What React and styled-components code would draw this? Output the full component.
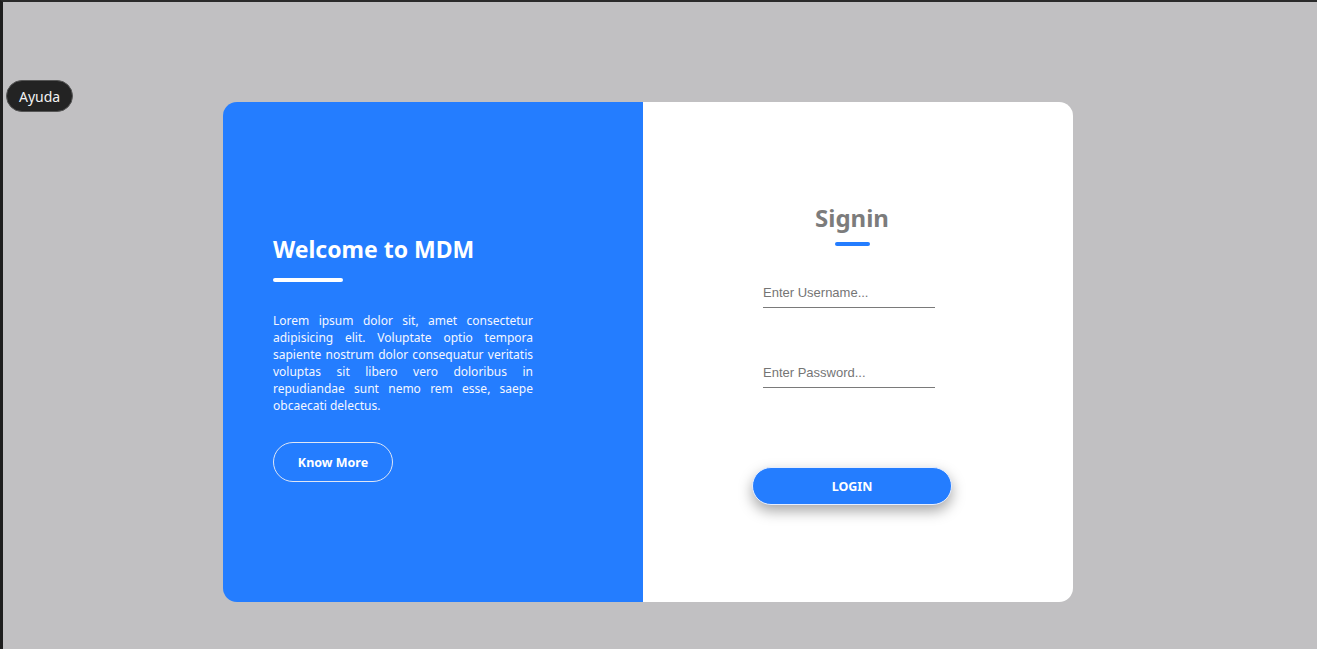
import React from "react";
import styled, { createGlobalStyle } from "styled-components";

const Global = createGlobalStyle`
  html, body { margin: 0; padding: 0; height: 100%; }
  body {
    background: #c1c0c2;
    font-family: "Noto Sans", "Open Sans", sans-serif;
    border-top: 2px solid #2a2a2a;
    border-left: 3px solid #1e1e1e;
    box-sizing: border-box;
    min-height: 649px;
  }
  #root { min-height: 647px; }
`;

const Page = styled.main`
  display: flex;
  padding: 100px 0 0 220px;
`;

const HelpButton = styled.button`
  position: fixed;
  left: 6px;
  top: 80px;
  height: 32px;
  padding: 0 12px;
  border-radius: 16px;
  background: #232323;
  border: 1px solid #555;
  color: #f2f2f2;
  font-family: "Noto Sans", sans-serif;
  font-size: 14px;
`;

const Card = styled.section`
  display: grid;
  grid-template-columns: 420px 430px;
  height: 500px;
  border-radius: 14px;
  overflow: hidden;
`;

const InfoPanel = styled.div`
  background: #247dff;
  color: #fff;
  padding: 132px 110px 0 50px;
  display: flex;
  flex-direction: column;
  align-items: flex-start;
`;

const Title = styled.h1`
  margin: 0;
  font-size: 23px;
  font-weight: 700;
  line-height: 30px;
`;

const Bar = styled.div`
  width: ${(p) => p.$w}px;
  height: 4px;
  border-radius: 2px;
  background: ${(p) => p.$color};
  margin-top: ${(p) => p.$mt}px;
`;

const Text = styled.p`
  margin: 30px 0 0;
  font-size: 12px;
  line-height: 17px;
  text-align: justify;
  color: #f4f7ff;
`;

const OutlineButton = styled.button`
  margin-top: 28px;
  width: 120px;
  height: 40px;
  border-radius: 20px;
  border: 1px solid #dfe6f5;
  background: transparent;
  color: #fff;
  font-family: "Noto Sans", sans-serif;
  font-weight: 700;
  font-size: 12.5px;
`;

const FormPanel = styled.div`
  background: #fff;
  display: flex;
  flex-direction: column;
  align-items: center;
  padding: 99px 12px 0 0;
`;

const FormTitle = styled.h2`
  margin: 0;
  font-size: 24px;
  font-weight: 700;
  line-height: 34px;
  color: #7c7c7c;
`;

const Field = styled.input`
  width: 172px;
  margin: ${(p) => p.$mt}px 6px 0 0;
  border: none;
  border-bottom: 1px solid #7a7a7a;
  padding: 0 0 7px;
  font-family: "Liberation Sans", Arial, sans-serif;
  font-size: 13px;
  outline: none;
  &::placeholder { color: #757575; }
`;

const LoginButton = styled.button`
  margin-top: 79px;
  width: 200px;
  height: 38px;
  border-radius: 19px;
  border: 1px solid #e6eeff;
  background: #247dff;
  color: #fff;
  font-family: "Noto Sans", sans-serif;
  font-weight: 700;
  font-size: 12.5px;
  box-shadow: 0 6px 14px rgba(0, 0, 0, 0.35);
`;

export default function App() {
  return (
    <>
      <Global />
      <HelpButton>Ayuda</HelpButton>
      <Page>
        <Card>
          <InfoPanel>
            <Title>Welcome to MDM</Title>
            <Bar $w={70} $color="#fff" $mt={14} />
            <Text>
              Lorem ipsum dolor sit, amet consectetur adipisicing elit. Voluptate optio tempora
              sapiente nostrum dolor consequatur veritatis voluptas sit libero vero doloribus in
              repudiandae sunt nemo rem esse, saepe obcaecati delectus.
            </Text>
            <OutlineButton>Know More</OutlineButton>
          </InfoPanel>
          <FormPanel>
            <FormTitle>Signin</FormTitle>
            <Bar $w={35} $color="#247dff" $mt={7} />
            <Field $mt={39} placeholder="Enter Username..." />
            <Field $mt={57} type="password" placeholder="Enter Password..." />
            <LoginButton>LOGIN</LoginButton>
          </FormPanel>
        </Card>
      </Page>
    </>
  );
}
